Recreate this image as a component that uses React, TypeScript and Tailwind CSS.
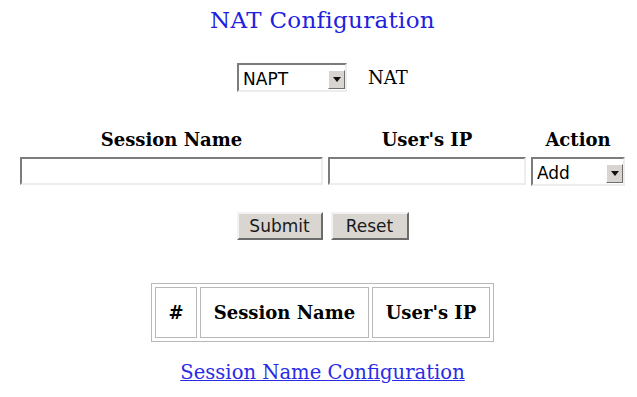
import { useState } from "react";

const serif = { fontFamily: '"DejaVu Serif", "Liberation Serif", serif' };
const sans = { fontFamily: '"DejaVu Sans", "Liberation Sans", sans-serif' };

const insetBox =
  "border-2 border-t-[#7c7c7c] border-l-[#7c7c7c] border-b-[#ededed] border-r-[#ededed] bg-white";

function OldSelect({
  value,
  options,
  onChange,
  width,
}: {
  value: string;
  options: string[];
  onChange: (v: string) => void;
  width: string;
}) {
  return (
    <div className={`relative h-[29px] ${width}`}>
      <select
        value={value}
        onChange={(e) => onChange(e.target.value)}
        className={`appearance-none w-full h-full pl-[4px] pt-[2px] text-[17px] text-black outline-none rounded-none ${insetBox}`}
        style={sans}
      >
        {options.map((o) => (
          <option key={o}>{o}</option>
        ))}
      </select>
      {/* drop-down arrow button drawn over the select */}
      <span className="pointer-events-none absolute right-[2px] bottom-[3px] w-[17px] h-[19px] bg-[#d8d5d0] border border-t-white border-l-white border-b-[#6f6f6f] border-r-[#6f6f6f] flex items-center justify-center">
        <svg width="8" height="5" viewBox="0 0 8 5">
          <path d="M0 0H8L4 5Z" fill="#111" />
        </svg>
      </span>
    </div>
  );
}

function OldButton({ label, width }: { label: string; width: string }) {
  return (
    <button
      type="button"
      className={`h-[28px] ${width} bg-[#d9d6d1] text-[17px] leading-none text-[#1a1a1a] border-2 border-t-[#f2f2f2] border-l-[#f2f2f2] border-b-[#6b6b6b] border-r-[#6b6b6b]`}
      style={sans}
    >
      {label}
    </button>
  );
}

export default function App() {
  const [mode, setMode] = useState("NAPT");
  const [action, setAction] = useState("Add");

  return (
    <div className="w-[637px] h-[397px] overflow-hidden bg-white">
      <div className="w-[645px] text-black flex flex-col items-center" style={serif}>
        <h1 className="mt-[6px] text-[23px] leading-[28px] tracking-[0.3px] text-[#2121dd]">
          NAT Configuration
        </h1>

        <div className="mt-[29px] flex items-center gap-[21px]">
          <OldSelect value={mode} options={["NAPT", "Basic NAT"]} onChange={setMode} width="w-[110px]" />
          <span className="text-[18px] leading-[22px]">NAT</span>
        </div>

        <div className="mt-[37px] grid grid-cols-[303px_198px_94px] gap-x-[5px] gap-y-[6px]">
          <div className="text-center font-bold text-[18px] leading-[22px]">Session Name</div>
          <div className="text-center font-bold text-[18px] leading-[22px]">User's IP</div>
          <div className="text-center font-bold text-[18px] leading-[22px]">Action</div>
          <input className={`h-[28px] outline-none ${insetBox}`} />
          <input className={`h-[28px] outline-none ${insetBox}`} />
          <OldSelect value={action} options={["Add", "Delete"]} onChange={setAction} width="w-[94px]" />
        </div>

        <div className="mt-[26px] flex gap-[8px]">
          <OldButton label="Submit" width="w-[86px]" />
          <OldButton label="Reset" width="w-[78px]" />
        </div>

        <table className="mt-[43px] border border-[#b8b8b8] border-separate border-spacing-[3px]">
          <thead>
            <tr>
              <th className="border border-[#b8b8b8] w-[42px] h-[51px] p-0 text-center text-[18px]">#</th>
              <th className="border border-[#b8b8b8] w-[169px] h-[51px] p-0 text-center text-[18px]">Session Name</th>
              <th className="border border-[#b8b8b8] w-[118px] h-[51px] p-0 text-center text-[18px]">User's IP</th>
            </tr>
          </thead>
        </table>

        <a href="#" className="mt-[19px] text-[19.6px] leading-[24px] text-[#2b2be6] underline">
          Session Name Configuration
        </a>
      </div>
    </div>
  );
}
